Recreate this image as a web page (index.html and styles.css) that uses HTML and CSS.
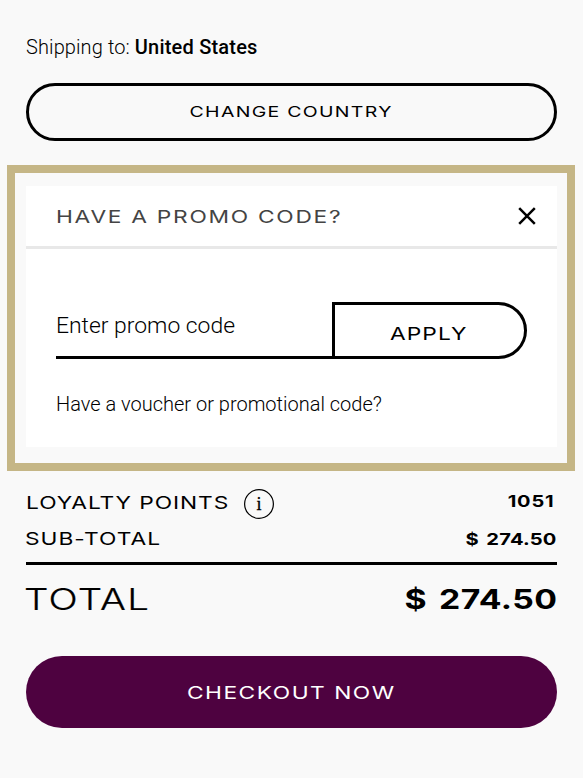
FILE: index.html
```html
<!DOCTYPE html>
<html lang="en">
<head>
<meta charset="utf-8">
<title>Checkout</title>
<link rel="stylesheet" href="styles.css">
</head>
<body>
<main class="summary">
  <p class="shipping">Shipping to: <strong>United States</strong></p>
  <button class="btn btn-outline"><span class="wide country">CHANGE COUNTRY</span></button>
  <section class="highlight">
    <div class="promo">
      <header class="promo-head">
        <h2 class="wide promo-title">HAVE A PROMO CODE?</h2>
        <svg class="close" viewBox="0 0 18 18" width="18" height="18" aria-label="Close"><path d="M1.2 1.2 16.8 16.8M16.8 1.2 1.2 16.8"/></svg>
      </header>
      <div class="promo-body">
        <div class="promo-form">
          <div class="field">Enter promo code</div>
          <button class="apply"><span class="wide apply-label">APPLY</span></button>
        </div>
        <p class="hint">Have a voucher or promotional code?</p>
      </div>
    </div>
  </section>
  <div class="row loyalty">
    <span class="wide loyalty-label">LOYALTY POINTS</span>
    <span class="info"><svg width="30" height="30" viewBox="0 0 30 30"><circle cx="15" cy="15" r="14.4"/></svg><span class="info-i">i</span></span>
    <span class="wide amount points">1051</span>
  </div>
  <div class="row subtotal">
    <span class="wide sub-label">SUB-TOTAL</span>
    <span class="wide amount sub-amount">$ 274.50</span>
  </div>
  <div class="row total">
    <span class="wide total-label">TOTAL</span>
    <span class="wide amount total-amount">$ 274.50</span>
  </div>
  <button class="btn btn-primary"><span class="wide checkout">CHECKOUT NOW</span></button>
</main>
</body>
</html>
```
FILE: styles.css
```css
* { box-sizing: border-box; }
body { margin: 0; background: #f9f9f9; color: #000; font-family: Roboto, sans-serif; font-weight: 300; }
p, h2 { margin: 0; }
button { font: inherit; color: inherit; padding: 0; }
.summary { padding: 35px 26px 0; }

/* Extended lettering: Inter stretched horizontally */
.wide { display: inline-block; font-family: Inter, sans-serif; font-weight: 400; font-size: 17.5px; line-height: 24px; white-space: nowrap; transform: scaleX(1.3); transform-origin: left center; }

.shipping { font-size: 20px; line-height: 24px; letter-spacing: 0.1px; }
.shipping strong { font-weight: 500; letter-spacing: 0.2px; }

.btn { display: flex; align-items: center; justify-content: center; width: 100%; }
.btn .wide { transform-origin: center; }
.btn-outline { height: 58px; margin-top: 24px; border: 3px solid #000; border-radius: 29px; background: transparent; }
.country { font-size: 15px; letter-spacing: 1px; }

.highlight { margin: 24px -18px 0 -19px; height: 306px; padding: 13px 10px 0 11px; border: 8px solid #c5b686; }
.promo { height: 261px; background: #fff; }
.promo-head { display: flex; align-items: center; justify-content: space-between; height: 63px; padding: 0 21.5px 0 29.5px; border-bottom: 3px solid #e8e8e8; }
.promo-title { padding-top: 2px; color: #444; letter-spacing: 1.31px; }
.close { fill: none; stroke: #000; stroke-width: 2.5; }
.promo-body { padding: 53px 30px 0; }
.promo-form { display: flex; height: 57px; }
.field { width: 276px; padding-top: 10px; border-bottom: 3px solid #000; font-size: 22.9px; line-height: 28px; }
.apply { flex: 1; padding: 6px 1px 0 0; border: 3px solid #000; border-radius: 0 29px 29px 0; background: transparent; }
.apply-label { letter-spacing: 0.8px; transform-origin: center; }
.hint { margin-top: 33px; font-size: 20px; line-height: 24px; }

.row { display: flex; align-items: center; }
.amount { margin-left: auto; font-weight: 700; transform-origin: right center; }
.loyalty { margin-top: 18px; height: 30px; }
.loyalty-label { width: 218px; margin-bottom: 2px; letter-spacing: 0.7px; }
.info { display: grid; place-items: center; width: 30px; height: 30px; }
.info svg, .info-i { grid-area: 1 / 1; }
.info svg { fill: none; stroke: #000; stroke-width: 1.2; }
.info-i { font: 400 18px/20px "Liberation Serif", serif; -webkit-text-stroke: 0.3px #000; }
.points { margin-right: 3px; margin-bottom: 7px; font-size: 16px; letter-spacing: 0.67px; transform: scaleX(1.25); }
.subtotal { height: 46px; padding-bottom: 3px; border-bottom: 3px solid #000; }
.sub-label { margin-left: -1px; letter-spacing: 0.75px; }
.sub-amount { font-size: 16.5px; letter-spacing: 0.15px; word-spacing: 2px; transform: scaleX(1.22); }
.total { height: 69px; }
.total-label { margin-left: -2px; padding-bottom: 2px; font-weight: 300; font-size: 30px; line-height: 36px; letter-spacing: 1px; transform: scaleX(1.28); -webkit-text-stroke: 0.2px #000; }
.total-amount { padding-top: 1px; font-size: 27px; line-height: 36px; letter-spacing: 0.3px; word-spacing: 3px; transform: scaleX(1.25); }

.btn-primary { height: 72px; margin-top: 22px; border: 0; border-radius: 36px; background: #4e0240; color: #fff; }
.checkout { padding-top: 2px; letter-spacing: 1.15px; }
```
